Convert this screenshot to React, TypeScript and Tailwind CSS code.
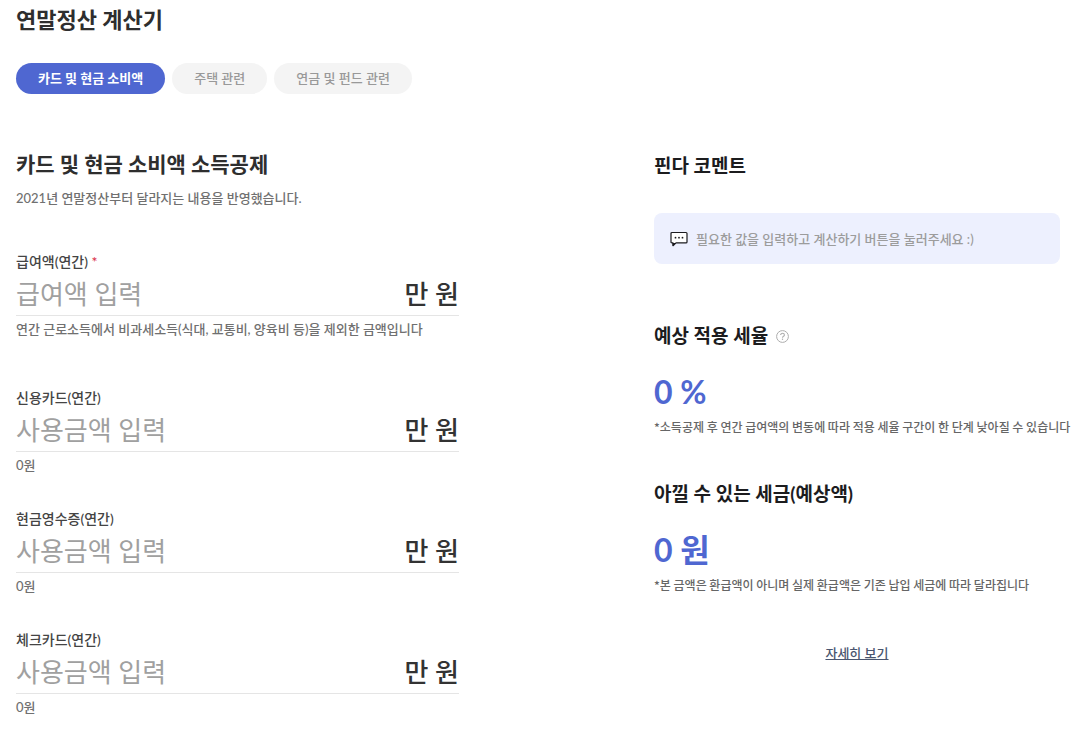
import React, { useState } from "react";

const tabs = [
  { id: "card", label: "카드 및 현금 소비액" },
  { id: "house", label: "주택 관련" },
  { id: "pension", label: "연금 및 펀드 관련" },
];

const fields = [
  {
    id: "salary",
    label: "급여액(연간)",
    placeholder: "급여액 입력",
    help: "연간 근로소득에서 비과세소득(식대, 교통비, 양육비 등)을 제외한 금액입니다",
    required: true,
  },
  { id: "credit", label: "신용카드(연간)", placeholder: "사용금액 입력", help: "0원" },
  { id: "cash", label: "현금영수증(연간)", placeholder: "사용금액 입력", help: "0원" },
  { id: "check", label: "체크카드(연간)", placeholder: "사용금액 입력", help: "0원" },
];

const CommentIcon = () => (
  <svg width="18" height="16" viewBox="0 0 18 16" fill="none" className="shrink-0" aria-hidden="true">
    <path
      d="M2 1.5h14q1 0 1 1v8.4q0 1-1 1H6l-3 2.8v-2.8H2q-1 0-1-1V2.5q0-1 1-1z"
      fill="#fff"
      stroke="#1b1b1f"
      strokeWidth="1.2"
      strokeLinejoin="round"
    />
    <path d="M2.6 12v3l3.4-3z" fill="#1b1b1f" />
    <circle cx="5.5" cy="6.7" r="0.9" fill="#1b1b1f" />
    <circle cx="9" cy="6.7" r="0.9" fill="#1b1b1f" />
    <circle cx="12.5" cy="6.7" r="0.9" fill="#1b1b1f" />
  </svg>
);

const HelpIcon = () => (
  <svg width="13" height="13" viewBox="0 0 13 13" fill="none" stroke="#adadad" aria-hidden="true">
    <circle cx="6.5" cy="6.5" r="5.9" strokeWidth="1" />
    <path d="M4.6 5.1c0-1.1.8-1.8 1.9-1.8s1.9.7 1.9 1.7c0 1.3-1.9 1.3-1.9 2.8" strokeWidth="1.1" />
    <path d="M6.5 8.6v1.3" strokeWidth="1.2" />
  </svg>
);

type FieldProps = {
  id: string;
  label: string;
  placeholder: string;
  help: string;
  required?: boolean;
};

const AmountField = ({ id, label, placeholder, help, required }: FieldProps) => (
  <div>
    <label htmlFor={id} className="block text-sm font-medium text-[#444]">
      {label}
      {required && <span className="text-[#d92b3f]"> *</span>}
    </label>
    <div className="mt-1 flex h-10 items-center border-b border-[#e5e5e5] pb-[3px]">
      <input
        id={id}
        type="text"
        inputMode="numeric"
        required={required}
        placeholder={placeholder}
        className="min-w-0 flex-1 bg-transparent text-[26px] leading-9 text-[#333] outline-none placeholder:text-[#a0a0a0]"
      />
      <span className="text-[26px] leading-9 font-medium text-[#333]">만 원</span>
    </div>
    <p className="mt-[3px] text-[13px] leading-5 font-medium text-[#707070]">{help}</p>
  </div>
);

export default function App() {
  const [active, setActive] = useState("card");

  return (
    <main className="bg-white pt-1 pr-[25px] pb-6 pl-4 font-[Lato,'Noto_Sans_CJK_KR',sans-serif]">
      <h1 className="text-[22px] leading-8 font-bold text-[#2e2e2e]">연말정산 계산기</h1>

      <div className="mt-[27px] flex gap-[7px]">
        {tabs.map((tab) => (
          <button
            key={tab.id}
            type="button"
            onClick={() => setActive(tab.id)}
            className={`h-[31px] rounded-full px-[22px] text-[13px] ${
              active === tab.id ? "bg-[#4f67d1] font-bold text-white" : "bg-[#f4f4f4] font-medium text-[#999]"
            }`}
          >
            {tab.label}
          </button>
        ))}
      </div>

      <div className="mt-[54px] grid grid-cols-[minmax(0,443fr)_minmax(0,406fr)] gap-x-[195px]">
        <section>
          <h2 className="text-[21px] leading-8 font-bold text-[#2e2e2e]">카드 및 현금 소비액 소득공제</h2>
          <p className="mt-2 text-[13px] leading-5 font-medium text-[#707070]">
            2021년 연말정산부터 달라지는 내용을 반영했습니다.
          </p>

          <form className="mt-11">
            <AmountField {...fields[0]} />
            <div className="mt-[49px] flex flex-col gap-[34px]">
              {fields.slice(1).map((field) => (
                <AmountField key={field.id} {...field} />
              ))}
            </div>
          </form>
        </section>

        <aside className="flex flex-col pt-1">
          <h2 className="text-[19px] leading-7 font-bold text-[#1c1c1e]">핀다 코멘트</h2>
          <div className="mt-[33px] flex h-[51px] items-center gap-2 rounded-lg bg-[#edf0fe] px-4">
            <CommentIcon />
            <p className="text-[13px] leading-5 font-medium text-[#9c9c9c]">
              필요한 값을 입력하고 계산하기 버튼을 눌러주세요 :)
            </p>
          </div>

          <div className="mt-[58px] flex items-center gap-2">
            <h2 className="text-[19px] leading-7 font-bold text-[#1c1c1e]">예상 적용 세율</h2>
            <button type="button" aria-label="세율 안내">
              <HelpIcon />
            </button>
          </div>
          <p className="mt-[19px] text-[32px] leading-[46px] font-bold text-[#4f67d1]">0 %</p>
          <p className="mt-1 font-['Noto_Sans_CJK_KR',sans-serif] text-xs font-medium whitespace-nowrap text-[#666]">
            *소득공제 후 연간 급여액의 변동에 따라 적용 세율 구간이 한 단계 낮아질 수 있습니다
          </p>

          <h2 className="mt-[45px] text-[19px] leading-7 font-bold text-[#1c1c1e]">아낄 수 있는 세금(예상액)</h2>
          <p className="mt-[19px] text-[32px] leading-[46px] font-bold text-[#4f67d1]">0 원</p>
          <p className="mt-1 font-['Noto_Sans_CJK_KR',sans-serif] text-xs font-medium whitespace-nowrap text-[#666]">
            *본 금액은 환급액이 아니며 실제 환급액은 기존 납입 세금에 따라 달라집니다
          </p>

          <a href="#detail" className="mt-[50px] self-center text-[13px] leading-5 font-medium text-[#4a5670] underline">
            자세히 보기
          </a>
        </aside>
      </div>
    </main>
  );
}
